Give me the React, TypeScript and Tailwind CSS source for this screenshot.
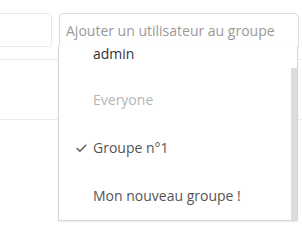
import { Check } from 'lucide-react';

const groups = [
  { id: 'admin', name: 'admin', disabled: false, selected: false },
  { id: 'everyone', name: 'Everyone', disabled: true, selected: false },
  { id: 'g1', name: 'Groupe n°1', disabled: false, selected: true },
  { id: 'new', name: 'Mon nouveau groupe !', disabled: false, selected: false },
];

const App = () => {
  return (
    <div
      className="relative w-[302px] h-[242px] overflow-hidden bg-white text-[13px]"
      style={{ fontFamily: '"Open Sans", "Liberation Sans", sans-serif' }}
    >
      {/* Toolbar row */}
      <div className="h-[60px] border-b border-[#ebebeb] pt-[13px]">
        <div className="flex gap-[7px] -ml-[9px]">
          <div className="w-[61px] h-[34px] shrink-0 rounded-[4px] border border-[#e6e6e6]" />
          <div className="w-[240px] h-[34px] shrink-0 flex items-center pl-[6px] rounded-t-[4px] border border-[#dcdcdc] text-[14px] text-[#9a9a9a]">
            Ajouter un utilisateur au groupe
          </div>
          <div className="w-[40px] h-[34px] shrink-0 -ml-[3px] rounded-[4px] border border-[#e6e6e6]" />
        </div>
      </div>
      <div className="h-[60px] border-b border-[#ebebeb]" />

      {/* Dropdown list (scrolled a little, so the first item sits at the top edge) */}
      <div className="absolute left-[58px] top-[46px] w-[240px] h-[175px] border border-t-0 border-[#d6d6d6] bg-white shadow-[0_1px_2px_rgba(0,0,0,0.08)] overflow-hidden">
        <div className="absolute right-0 top-[22px] bottom-0 w-[6px] bg-[#dcdcdc]" />
        <ul className="pt-[1px]">
          {groups.map((g, i) => (
            <li
              key={g.id}
              className={`flex ${i === 0 ? 'h-[29px] items-start' : 'h-[48px] items-center'} ${
                g.disabled ? 'text-[#b5b5b5]' : g.id === 'admin' ? 'text-[#333]' : 'text-[#555]'
              }`}
            >
              <span className="w-[34px] flex justify-end pr-[5px]">
                {g.selected && <Check size={13} strokeWidth={2.5} className="text-[#555]" />}
              </span>
              <span className="text-[14px] leading-[14px]">{g.name}</span>
            </li>
          ))}
        </ul>
      </div>
    </div>
  );
};

export default App;
